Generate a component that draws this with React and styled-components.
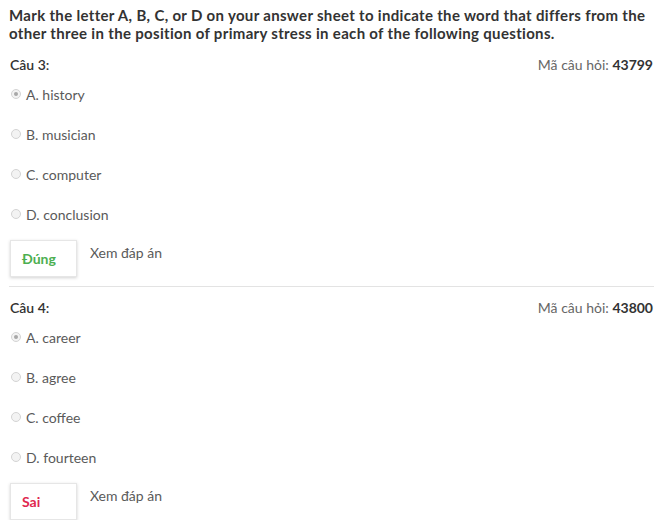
import React from 'react'
import styled, { createGlobalStyle } from 'styled-components'

const GlobalStyle = createGlobalStyle`
  body {
    margin: 0;
    background: #fff;
    font-family: Lato, "Noto Sans", sans-serif;
    color: #333;
  }
`

const questions = [
  {
    id: 3,
    code: '43799',
    options: ['A. history', 'B. musician', 'C. computer', 'D. conclusion'],
    checked: 0,
    result: 'Đúng',
    correct: true,
  },
  {
    id: 4,
    code: '43800',
    options: ['A. career', 'B. agree', 'C. coffee', 'D. fourteen'],
    checked: 0,
    result: 'Sai',
    correct: false,
  },
]

const Page = styled.div`
  padding: 6px 14px 0 9px;
`

const Intro = styled.p`
  margin: 0 0 12px;
  font-size: 15px;
  font-weight: 700;
  line-height: 18px;
  color: #333;
  letter-spacing: 0.32px;
`

const Question = styled.div`
  padding-left: 1px;
  padding-right: 1px;
  & + & {
    border-top: 1px solid #e3e3e3;
    margin-top: 9px;
    padding-top: 10px;
  }
`

const HeadRow = styled.div`
  display: flex;
  justify-content: space-between;
  align-items: center;
  height: 20px;
  font-size: 14px;
`

const Title = styled.span`
  font-weight: 600;
  color: #333;
`

const Code = styled.span`
  color: #666;
  b {
    color: #333;
    font-weight: 700;
  }
`

const Option = styled.label`
  display: flex;
  align-items: center;
  gap: 5px;
  height: 40px;
  padding-left: 1px;
  font-size: 14px;
  color: #5a5a5a;
`

const Radio = styled.span`
  width: 8px;
  height: 8px;
  border-radius: 50%;
  border: 1px solid #d4d4d4;
  background: #f3f3f3;
  display: flex;
  align-items: center;
  justify-content: center;
  &::after {
    content: '';
    width: 4px;
    height: 4px;
    border-radius: 50%;
    background: ${({ $checked }) => ($checked ? '#a8a8a8' : 'transparent')};
  }
`

const Footer = styled.div`
  display: flex;
  align-items: flex-start;
  gap: 13px;
  margin-top: 6px;
`

const Result = styled.div`
  width: 67px;
  height: 37px;
  box-sizing: border-box;
  padding: 0 11px;
  display: flex;
  align-items: center;
  border: 1px solid #e6e6e6;
  box-shadow: 0 1px 3px rgba(0, 0, 0, 0.18);
  font-size: 14px;
  font-weight: 700;
  color: ${({ $correct }) => ($correct ? '#4caf50' : '#e0284f')};
`

const Answer = styled.span`
  font-size: 14px;
  color: #5a5a5a;
  line-height: 20px;
  margin-top: 3px;
`

export default function App() {
  return (
    <>
      <GlobalStyle />
      <Page>
        <Intro>
          Mark the letter A, B, C, or D on your answer sheet to indicate the word that differs from the other three in the position of primary stress in each of the following questions.
        </Intro>
        {questions.map((q) => (
          <Question key={q.id}>
            <HeadRow>
              <Title>Câu {q.id}:</Title>
              <Code>
                Mã câu hỏi: <b>{q.code}</b>
              </Code>
            </HeadRow>
            {q.options.map((o, i) => (
              <Option key={o}>
                <Radio $checked={i === q.checked} />
                {o}
              </Option>
            ))}
            <Footer>
              <Result $correct={q.correct}>{q.result}</Result>
              <Answer>Xem đáp án</Answer>
            </Footer>
          </Question>
        ))}
      </Page>
    </>
  )
}
